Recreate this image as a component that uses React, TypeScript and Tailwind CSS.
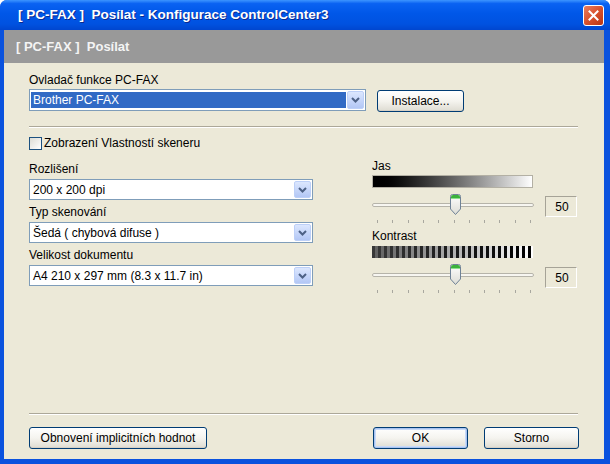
import React from "react";

const hex = (v: number) => {
  const h = Math.round(v).toString(16).padStart(2, "0");
  return `#${h}${h}${h}`;
};

const Chevron = () => (
  <svg width="9" height="6" viewBox="0 0 9 6">
    <path d="M1 1l3.5 3.5L8 1" stroke="#4d6185" strokeWidth="2" fill="none" />
  </svg>
);

function Combo({
  value,
  focused = false,
  className = "",
}: {
  value: string;
  focused?: boolean;
  className?: string;
}) {
  return (
    <div className={`flex border border-[#7f9db9] bg-white p-[1px] ${className}`}>
      <div className="flex flex-1 items-stretch py-[1px] pr-[1px]">
        <div
          className={`flex flex-1 items-center pl-[2px] ${
            focused ? "bg-[#316ac5] text-white" : "text-black"
          }`}
        >
          {value}
        </div>
      </div>
      <div className="flex w-[17px] items-center justify-center rounded-[2px] border border-[#bdd0f8] bg-gradient-to-b from-[#dce7fe] to-[#b3c7f5]">
        <Chevron />
      </div>
    </div>
  );
}

function XpButton({
  label,
  isDefault = false,
  className = "",
}: {
  label: string;
  isDefault?: boolean;
  className?: string;
}) {
  return (
    <button
      className={`flex h-[22px] items-center justify-center rounded-[3px] border border-[#003c74] bg-gradient-to-b from-white via-[#f5f4ef] to-[#dedcd2] text-[12px] text-black ${
        isDefault ? "shadow-[inset_0_0_0_1px_#a8c3f0,inset_0_0_0_2px_#c8daf8]" : "shadow-[inset_0_-1px_0_#d6d0c5]"
      } ${className}`}
    >
      {label}
    </button>
  );
}

function Trackbar({ id }: { id: string }) {
  const ticks = Array.from({ length: 11 }, (_, i) => Math.round(5 + i * 15.3));
  return (
    <svg width="163" height="30" viewBox="0 0 163 30">
      <defs>
        <linearGradient id={id} x1="0" y1="0" x2="0" y2="1">
          <stop offset="0" stopColor="#ffffff" />
          <stop offset="1" stopColor="#dcdcd4" />
        </linearGradient>
      </defs>
      <rect x="0.5" y="9.5" width="161" height="3" rx="1.5" fill="#f7f6f1" stroke="#b6b4aa" />
      {ticks.map((x) => (
        <line key={x} x1={x + 0.5} x2={x + 0.5} y1="26" y2="29" stroke="#a8a79f" />
      ))}
      <g transform="translate(78,0)">
        <path
          d="M0.5 2.5Q0.5 0.5 2.5 0.5H8.5Q10.5 0.5 10.5 2.5V15L5.5 20.5L0.5 15Z"
          fill={`url(#${id})`}
          stroke="#6f8296"
        />
        <path d="M1 3Q1 1 3 1H8Q10 1 10 3V4H1Z" fill="#3cb33c" />
        <line x1="1" x2="10" y1="4.5" y2="4.5" stroke="#8ee08e" />
      </g>
    </svg>
  );
}

function Stripes() {
  const bars = Array.from({ length: 27 }, (_, i) => i);
  return (
    <svg width="161" height="12" viewBox="0 0 161 12">
      {bars.map((i) => {
        const t = i / 26;
        return (
          <g key={i}>
            <rect x={i * 6} y="0" width="3" height="12" fill={hex(0x38 * (1 - t))} />
            <rect x={i * 6 + 3} y="0" width="3" height="12" fill={hex(0x62 + (0xff - 0x62) * t)} />
          </g>
        );
      })}
    </svg>
  );
}

function ValueBox() {
  return (
    <div className="flex h-[21px] w-[32px] items-center justify-center border border-[#a6a397] border-b-white border-r-white bg-[#ece9d8] pl-[2px] text-[12px]">
      50
    </div>
  );
}

export default function App() {
  return (
    <div className="flex h-[464px] w-[610px] flex-col overflow-hidden rounded-t-[7px] bg-[#0a52de] [font-family:'Liberation_Sans',Arial,sans-serif]">
      {/* title bar */}
      <div className="flex h-[30px] items-center bg-[linear-gradient(180deg,#3d95ff_0%,#0a62f2_12%,#0057e8_45%,#0052e0_80%,#0046cf_100%)] pl-[18px] pr-[6px]">
        <span className="flex-1 whitespace-pre text-[13.5px] font-bold text-white [text-shadow:1px_1px_#0b2a8f]">
          {"[ PC-FAX ]  Posílat - Konfigurace ControlCenter3"}
        </span>
        <div className="flex h-[21px] w-[21px] items-center justify-center rounded-[3px] border border-white bg-gradient-to-br from-[#e97d5f] via-[#d9512c] to-[#b9340f]">
          <svg width="11" height="11" viewBox="0 0 11 11">
            <path d="M1.5 1.5l8 8M9.5 1.5l-8 8" stroke="white" strokeWidth="2" strokeLinecap="square" />
          </svg>
        </div>
      </div>

      <div className="flex flex-1 flex-col pb-[5px] pl-[4px] pr-[6px]">
        {/* header band */}
        <div className="flex h-[33px] items-center whitespace-pre bg-[#999999] pl-[12px] text-[13px] font-bold text-[#f4f4f4]">
          {"[ PC-FAX ]  Posílat"}
        </div>

        {/* content */}
        <div className="flex flex-1 flex-col bg-[#ece9d8] pb-[10px] pl-[25px] pr-[25px] pt-[10px] text-[12px] text-black">
          <div className="h-[14px] leading-[14px]">Ovladač funkce PC-FAX</div>
          <div className="mt-[2px] flex items-start gap-[11px]">
            <Combo value="Brother PC-FAX" focused className="h-[22px] w-[337px]" />
            <XpButton label="Instalace..." className="mt-[1px] w-[87px]" />
          </div>

          <div className="mr-[1px] mt-[14px] h-[2px] border-b border-t border-b-white border-t-[#aca899]" />

          <div className="mt-[9px] flex h-[13px] items-center gap-[2px]">
            <div className="h-[13px] w-[13px] border border-[#1c5180] bg-gradient-to-br from-[#dcdcd5] to-white" />
            <span className="leading-[13px]">Zobrazení Vlastností skeneru</span>
          </div>

          <div className="mt-[9px] flex">
            {/* left column */}
            <div className="flex w-[284px] flex-col pt-[3px]">
              <div className="h-[14px] leading-[14px]">Rozlišení</div>
              <Combo value="200 x 200 dpi" className="mt-[3px] h-[21px]" />
              <div className="mt-[5px] h-[14px] leading-[14px]">Typ skenování</div>
              <Combo value="Šedá ( chybová difuse )" className="mt-[3px] h-[21px]" />
              <div className="mt-[5px] h-[14px] leading-[14px]">Velikost dokumentu</div>
              <Combo value="A4 210 x 297 mm (8.3 x 11.7 in)" className="mt-[3px] h-[21px]" />
            </div>

            {/* right column */}
            <div className="ml-[59px] flex w-[205px] flex-col">
              <div className="h-[14px] leading-[14px]">Jas</div>
              <div className="mt-[2px] h-[13px] w-[161px] border border-[#b3b0a4] bg-gradient-to-r from-black to-white" />
              <div className="mt-[6px] flex items-start">
                <Trackbar id="thumb-jas" />
                <div className="ml-auto mt-[2px]">
                  <ValueBox />
                </div>
              </div>
              <div className="mt-[5px] h-[14px] leading-[14px]">Kontrast</div>
              <div className="mt-[3px] h-[12px]">
                <Stripes />
              </div>
              <div className="mt-[6px] flex items-start">
                <Trackbar id="thumb-kontrast" />
                <div className="ml-auto mt-[3px]">
                  <ValueBox />
                </div>
              </div>
            </div>
          </div>

          <div className="mr-[1px] mt-auto h-[2px] border-b border-t border-b-white border-t-[#aca899]" />
          <div className="mt-[12px] flex gap-[16px]">
            <XpButton label="Obnovení implicitních hodnot" className="w-[178px]" />
            <XpButton label="OK" isDefault className="ml-auto w-[95px]" />
            <XpButton label="Storno" className="w-[95px]" />
          </div>
        </div>
      </div>
    </div>
  );
}
